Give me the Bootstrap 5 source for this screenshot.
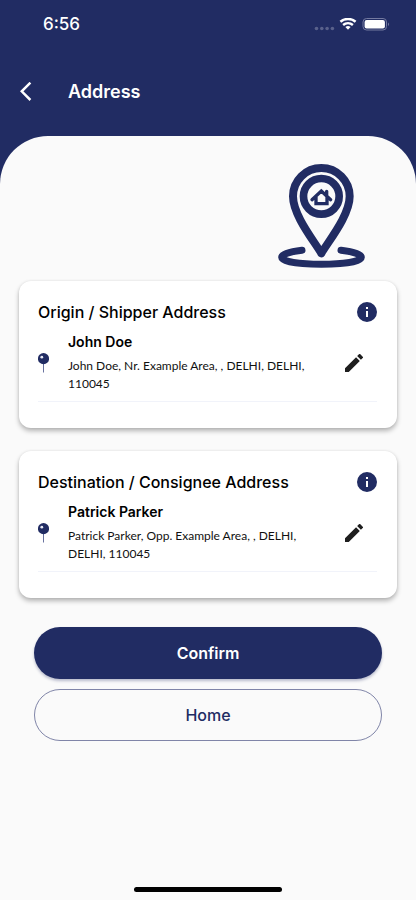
<!DOCTYPE html>
<html lang="en">
<head>
<meta charset="utf-8">
<meta name="viewport" content="width=device-width, initial-scale=1">
<title>Address</title>
<link href="https://cdn.jsdelivr.net/npm/bootstrap@5.3.0/dist/css/bootstrap.min.css" rel="stylesheet">
<style>
  :root { --navy: #212c63; }
  body { font-family: Inter, "Open Sans", sans-serif; background: var(--navy); color: #000; }
  svg { display: block; flex: none; }
  .status { height: 48px; padding: 2px 27px 0 43px; font-size: 17px; font-weight: 500; }
  .topbar { height: 88px; padding: 0 20px; gap: 36px; }
  .topbar h1 { font-size: 18px; line-height: 24px; font-weight: 600; }
  .icon-btn { background: none; border: 0; padding: 0; color: inherit; }
  .sheet { background: #fafafa; border-radius: 48px 48px 0 0; padding: 28px 19px 8px; }
  .place { padding-right: 32px; margin-bottom: 13px; color: var(--navy); }
  .address { border: 0; border-radius: 12px; padding: 19px 20px 26px 19px; margin-bottom: 23px;
    box-shadow: 0 3px 5px rgba(0,0,0,.28), 0 0 3px rgba(0,0,0,.08); color: #000; }
  .address h2 { font-size: 16px; line-height: 24px; font-weight: 500; }
  .address h3 { font-size: 14px; line-height: 20px; font-weight: 600; margin-bottom: 5px; }
  .address p { font-family: Lato, Inter, sans-serif; font-size: 12px; line-height: 18px; color: #111; }
  .entry { padding: 8px 14px 8px 0; gap: 19px; border-bottom: 1px solid #f1f3fa; }
  .pencil { color: #1e1e1e; }
  .info { color: var(--navy); }
  .actions { padding: 6px 15px 0; gap: 10px; }
  .action { height: 52px; font-size: 16px; font-weight: 500; }
  .action-main, .action-main:hover { background: var(--navy); color: #fff; font-weight: 600; box-shadow: 0 2px 3px rgba(33,44,99,.3); }
  .action-line, .action-line:hover { border: 1px solid #8085a8; color: var(--navy); }
  .home-bar { width: 148px; height: 5px; background: #000; }
</style>
<script src="https://cdn.jsdelivr.net/npm/bootstrap@5.3.0/dist/js/bootstrap.bundle.min.js"></script>
</head>
<body>
<svg class="d-none" aria-hidden="true">
  <symbol id="pin" viewBox="0 0 11 20">
    <path d="M5.5 10v9.500" stroke="#69729f" stroke-width="1"/>
    <circle cx="5.500" cy="5.600" r="5.600" fill="#212c63"/>
    <circle cx="3.800" cy="4.200" r="1.400" fill="#e8eaf5"/>
  </symbol>
  <symbol id="info" viewBox="2 2 20 20">
    <path fill="currentColor" d="M12 2a10 10 0 1 0 0 20 10 10 0 0 0 0-20zm1 15h-2v-6h2zm0-8h-2V7h2z"/>
  </symbol>
  <symbol id="pencil" viewBox="3 3 18 18">
    <path fill="currentColor" d="M3 17.250V21h3.750L17.810 9.940l-3.750-3.750zM20.710 7.040a1 1 0 0 0 0-1.410l-2.340-2.340a1 1 0 0 0-1.410 0l-1.830 1.830 3.750 3.750z"/>
  </symbol>
</svg>
<div class="d-flex flex-column min-vh-100">
  <div class="status d-flex justify-content-between align-items-center text-white">
    <span>6:56</span>
    <svg width="75" height="14" viewBox="0 0 75 14" aria-hidden="true">
      <g fill="#59618b"><circle cx="2.500" cy="10.500" r="1.800"/><circle cx="7.800" cy="10.500" r="1.800"/><circle cx="13.100" cy="10.500" r="1.800"/><circle cx="18.400" cy="10.500" r="1.800"/></g>
      <g fill="none" stroke="#fff" stroke-width="2.500"><path d="M26.400 3.700a12 12 0 0 1 15.200 0M29.100 7a7.700 7.700 0 0 1 9.800 0"/></g>
      <path fill="#fff" d="M31.400 9a4 4 0 0 1 5.200 0L34 11.800z"/>
      <rect x="49" y=".5" width="23.500" height="11.500" rx="3.500" fill="none" stroke="#747aa0"/>
      <rect x="50.600" y="2.100" width="20.300" height="8.300" rx="2" fill="#fff"/>
      <path d="M74 4.500c1.300.8 1.300 2.800 0 3.600z" fill="#747aa0"/>
    </svg>
  </div>
  <header class="topbar d-flex align-items-center text-white">
    <button class="icon-btn" type="button" aria-label="Back">
      <svg width="12" height="20" viewBox="0 0 12 20" fill="none" stroke="#fff" stroke-width="2.500"><path d="M10.400.7 1.700 9.300l8.700 8.700"/></svg>
    </button>
    <h1 class="m-0">Address</h1>
  </header>
  <main class="sheet flex-grow-1 d-flex flex-column">
    <div class="place d-flex justify-content-end">
      <svg width="87" height="104" viewBox="54 42 261 312" fill="none" stroke="currentColor" stroke-linecap="round" stroke-linejoin="round" aria-hidden="true">
        <path stroke-width="24" d="M184 310C160 270 99 195 99 139a85 85 0 0 1 170 0c0 56-61 131-85 171z"/>
        <circle cx="184" cy="139" r="53.500" stroke-width="23"/>
        <path stroke-width="21" d="M126 301c-36 4-61 11-61 21 0 13 54 21 119 21s120-8 120-21c0-10-25-17-61-21"/>
        <path stroke-width="10" stroke-linejoin="miter" d="M156 149l28-26 28 26M168 141v20h33v-20M200 134v-10"/>
      </svg>
    </div>

    <section class="address card">
      <div class="d-flex justify-content-between align-items-center">
        <h2 class="m-0">Origin / Shipper Address</h2>
        <button class="icon-btn info" type="button" aria-label="Origin address information"><svg width="20" height="20"><use href="#info"/></svg></button>
      </div>
      <div class="entry d-flex align-items-center">
        <svg width="11" height="20" aria-hidden="true"><use href="#pin"/></svg>
        <div class="flex-grow-1">
          <h3>John Doe</h3>
          <p class="m-0">John Doe, Nr. Example Area, , DELHI, DELHI, 110045</p>
        </div>
        <button class="icon-btn pencil" type="button" aria-label="Edit origin address"><svg width="18" height="18"><use href="#pencil"/></svg></button>
      </div>
    </section>

    <section class="address card">
      <div class="d-flex justify-content-between align-items-center">
        <h2 class="m-0">Destination / Consignee Address</h2>
        <button class="icon-btn info" type="button" aria-label="Destination address information"><svg width="20" height="20"><use href="#info"/></svg></button>
      </div>
      <div class="entry d-flex align-items-center">
        <svg width="11" height="20" aria-hidden="true"><use href="#pin"/></svg>
        <div class="flex-grow-1">
          <h3>Patrick Parker</h3>
          <p class="m-0">Patrick Parker, Opp. Example Area, , DELHI, DELHI, 110045</p>
        </div>
        <button class="icon-btn pencil" type="button" aria-label="Edit destination address"><svg width="18" height="18"><use href="#pencil"/></svg></button>
      </div>
    </section>

    <div class="actions d-grid">
      <button class="action action-main btn rounded-pill border-0" type="button">Confirm</button>
      <button class="action action-line btn rounded-pill" type="button">Home</button>
    </div>
    <div class="home-bar rounded-pill mx-auto mt-auto"></div>
  </main>
</div>
</body>
</html>
